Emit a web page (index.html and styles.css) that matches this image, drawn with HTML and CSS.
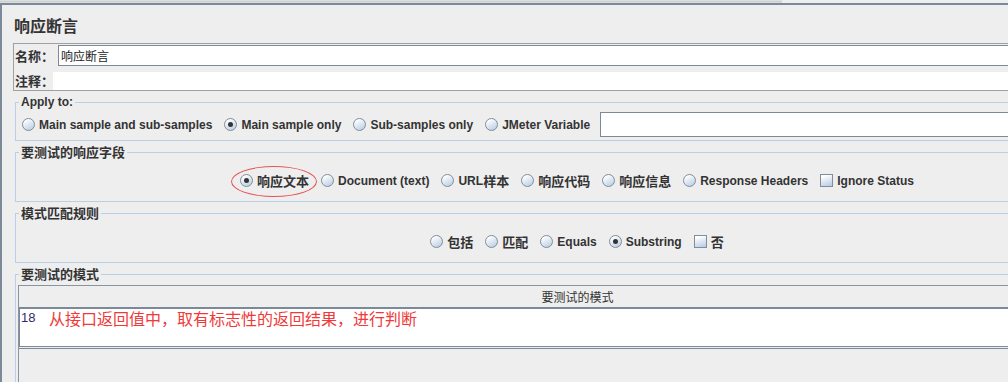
FILE: index.html
```html
<!DOCTYPE html>
<html lang="zh-CN">
<head>
<meta charset="utf-8">
<title>响应断言</title>
<link rel="stylesheet" href="styles.css">
</head>
<body>
<div class="topstrip"></div>
<div class="frame">
  <h1 class="title">响应断言</h1>

  <div class="name-panel">
    <div class="np-row np-row1">
      <span class="np-label np-label1">名称：</span>
      <div class="np-field np-field1">响应断言</div>
    </div>
    <div class="np-row np-row2">
      <span class="np-label np-label2">注释：</span>
      <div class="np-field np-field2"></div>
    </div>
  </div>

  <fieldset class="group g-apply">
    <legend class="lg-latin">Apply to:</legend>
    <div class="row row-left">
      <span class="opt"><span class="radio"></span>Main sample and sub-samples</span>
      <span class="opt"><span class="radio on"></span>Main sample only</span>
      <span class="opt"><span class="radio"></span>Sub-samples only</span>
      <span class="opt"><span class="radio"></span>JMeter Variable</span>
      <span class="textbox"></span>
    </div>
  </fieldset>

  <fieldset class="group g-field">
    <legend class="lg-cjk">要测试的响应字段</legend>
    <div class="row row-center">
      <span class="opt cjk marked"><span class="radio on"></span>响应文本</span>
      <span class="opt"><span class="radio"></span>Document (text)</span>
      <span class="opt"><span class="radio"></span>URL<span class="cjk">样本</span></span>
      <span class="opt cjk"><span class="radio"></span>响应代码</span>
      <span class="opt cjk"><span class="radio"></span>响应信息</span>
      <span class="opt"><span class="radio"></span>Response Headers</span>
      <span class="opt"><span class="check"></span>Ignore Status</span>
    </div>
  </fieldset>

  <fieldset class="group g-rule">
    <legend class="lg-cjk">模式匹配规则</legend>
    <div class="row row-center">
      <span class="opt cjk"><span class="radio"></span>包括</span>
      <span class="opt cjk"><span class="radio"></span>匹配</span>
      <span class="opt"><span class="radio"></span>Equals</span>
      <span class="opt"><span class="radio on"></span>Substring</span>
      <span class="opt cjk"><span class="check"></span>否</span>
    </div>
  </fieldset>

  <fieldset class="group g-pattern">
    <legend class="lg-cjk">要测试的模式</legend>
    <div class="tbl">
      <div class="thead">要测试的模式</div>
      <div class="tbody">
        <div class="trow"><span class="lineno">18</span><span class="pattern">从接口返回值中，取有标志性的返回结果，进行判断</span></div>
      </div>
      <div class="tfoot"></div>
    </div>
  </fieldset>
</div>
</body>
</html>
```

FILE: styles.css
```css
* { box-sizing: border-box; }

html, body {
  margin: 0;
  padding: 0;
}

body {
  width: 1008px;
  height: 382px;
  overflow: hidden;
  background: #eeeeee;
  color: #333333;
  font-family: "Liberation Sans", "Noto Sans CJK SC", sans-serif;
  font-size: 12px;
}

.topstrip {
  width: 782px;
  height: 3px;
  background: linear-gradient(#e4e4e4, #d0d0d0 50%, #e0e0e0);
}

.frame {
  width: 1152px;
  border-top: 2px solid #7b8a99;
  border-left: 2px solid #7b8a99;
}

.title {
  margin: 12px 0 0 12px;
  height: 16px;
  font: bold 16px/16px "Noto Sans CJK SC", sans-serif;
  color: #333333;
}

/* name / comment panel */
.name-panel {
  margin: 10px 0 0 11px;
  border: 1px solid #a0a0a0;
  border-right: none;
}

.np-row {
  display: flex;
}

.np-row1 {
  height: 22px;
  padding-top: 1px;
}

.np-row2 {
  height: 24px;
  padding-top: 6px;
}

.np-label {
  flex: none;
  padding-left: 1px;
  white-space: nowrap;
  font: bold 13px/18px "Noto Sans CJK SC", sans-serif;
  color: #333333;
}

.np-label1 { width: 44px; line-height: 21px; }
.np-label2 { width: 39px; }

.np-field {
  flex: 1;
  background: #ffffff;
}

.np-field1 {
  height: 21px;
  border: 1px solid #7b8a99;
  border-right: none;
  padding-left: 2px;
  font: 12px/19px "Noto Sans CJK SC", sans-serif;
  color: #222222;
}

.np-field2 {
  height: 18px;
}

/* titled groups */
.group {
  margin: 4px 13px 0 13px;
  padding: 0;
  min-width: 0;
  border: 1px solid #b8cfe5;
}

.group legend {
  margin-left: 3px;
  padding: 0 2px;
  color: #333333;
}

.lg-latin {
  font: bold 12px/14px "Liberation Sans", sans-serif;
}

.lg-cjk {
  font: bold 13px/14px "Noto Sans CJK SC", sans-serif;
}

.g-apply {
  padding: 3px 0 3px 0;
}

.g-field,
.g-rule {
  padding: 11px 0 10px 0;
}

.g-pattern {
  padding: 4px 0 0 2px;
  border-bottom: none;
}

.g-pattern legend {
  margin-left: 1px;
}

.row {
  display: flex;
  align-items: center;
}

.row-left {
  height: 25px;
  padding-left: 6px;
  gap: 12px;
}

.row-center {
  height: 21px;
  justify-content: center;
  gap: 12px;
}

.opt {
  display: inline-flex;
  align-items: center;
  height: 21px;
  font-weight: bold;
  font-size: 12px;
  white-space: nowrap;
  color: #333333;
}

.cjk {
  font-family: "Noto Sans CJK SC", sans-serif;
  font-size: 13px;
  font-weight: bold;
}

.radio {
  position: relative;
  flex: none;
  width: 13px;
  height: 13px;
  margin-right: 4px;
  border-radius: 50%;
  border: 1px solid #7f8d9c;
  background: linear-gradient(150deg, #ffffff 15%, #dfe8f2 50%, #b9cde3 95%);
}

.radio.on::after {
  content: "";
  position: absolute;
  left: 3px;
  top: 3px;
  width: 5px;
  height: 5px;
  border-radius: 50%;
  background: #333333;
}

.check {
  flex: none;
  width: 13px;
  height: 13px;
  margin-right: 4px;
  border: 1px solid #7f8d9c;
  background: linear-gradient(160deg, #ffffff 15%, #dfe8f2 50%, #b9cde3 95%);
}

.marked {
  position: relative;
}

.marked::before {
  content: "";
  position: absolute;
  left: -9px;
  top: -4px;
  width: 84px;
  height: 29px;
  border: 1px solid #e45454;
  border-radius: 50%;
}

.textbox {
  flex: 1;
  height: 25px;
  margin-left: -2px;
  margin-right: 6px;
  background: #ffffff;
  border: 1px solid #7b8a99;
}

/* pattern table */
.tbl {
  border-left: 1px solid #8794a2;
  border-top: 1px solid #8794a2;
  margin-right: 2px;
}

.thead {
  height: 21px;
  text-align: center;
  font: 12px/21px "Noto Sans CJK SC", sans-serif;
  color: #333333;
}

.tbody {
  height: 40px;
  background: #ffffff;
  border-top: 2px solid #7b8a99;
  border-left: 1px solid #7b8a99;
  border-bottom: 1px solid #7b8a99;
}

.trow {
  display: flex;
  align-items: center;
  height: 18px;
  padding-left: 1px;
}

.lineno {
  width: 28px;
  font: 13px/18px "Liberation Sans", sans-serif;
  color: #2b2b6b;
}

.pattern {
  font: 16px/18px "Noto Sans CJK SC", sans-serif;
  color: #f03a3a;
  white-space: nowrap;
}

.tfoot {
  height: 50px;
  margin-top: 1px;
  border-top: 1px solid #7b8a99;
}
```
